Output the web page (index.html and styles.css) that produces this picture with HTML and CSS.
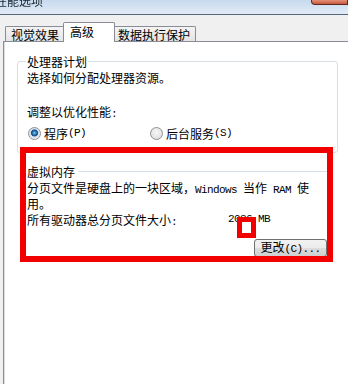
FILE: index.html
```html
<!DOCTYPE html>
<html lang="zh-CN">
<head>
<meta charset="utf-8">
<title>性能选项</title>
<link rel="stylesheet" href="styles.css">
</head>
<body>
<div class="titlebar">
  <span class="title">性能选项</span>
  <span class="close"></span>
</div>
<div class="tabstrip">
  <div class="tab first">视觉效果</div>
  <div class="tab active">高级</div>
  <div class="tab last">数据执行保护</div>
</div>
<div class="panel">
  <fieldset class="group">
    <legend>处理器计划</legend>
    <p class="line">选择如何分配处理器资源。</p>
    <p class="line gap-lg">调整以优化性能<span class="en">:</span></p>
    <div class="radios">
      <label class="opt"><span class="radio checked"></span>程序<span class="en">(P)</span></label>
      <label class="opt"><span class="radio"></span>后台服务<span class="en">(S)</span></label>
    </div>
  </fieldset>
  <section class="group2">
    <div class="g2head"><span>虚拟内存</span><span class="rule"></span></div>
    <p class="line gap-sm">分页文件是硬盘上的一块区域，<span class="en">Windows </span>当作<span class="en"> RAM </span>使<br>用。</p>
    <div class="size gap-sm"><span class="lbl">所有驱动器总分页文件大小<span class="en">:</span></span><span class="en">2036 MB</span></div>
    <div class="btnrow"><button class="btn" type="button">更改<span class="en">(C)...</span></button></div>
  </section>
</div>
<div class="mark big"></div>
<div class="mark small"></div>
</body>
</html>
```

FILE: styles.css
```css
html, body {
  margin: 0;
  height: 100%;
}
body {
  display: flex;
  flex-direction: column;
  background: #f0f0f0;
  font: 12px/13px "Noto Sans CJK SC", sans-serif;
  color: #000;
  overflow: hidden;
}
.en {
  font-family: "Liberation Mono", monospace;
  font-size: 11px;
  letter-spacing: -0.6px;
}
.titlebar {
  height: 14px;
  border-bottom: 1px solid #56677b;
  background: linear-gradient(#c6daee, #e2ecf7);
  display: flex;
  justify-content: space-between;
  overflow: hidden;
  flex: none;
}
.title {
  font-size: 12px;
  line-height: 12px;
  margin: -5px 0 0 -5px;
  color: #1c2630;
  filter: blur(0.4px);
}
.close {
  width: 35px;
  height: 4px;
  background: linear-gradient(#e3917a, #c9573c);
  border: 1px solid #5e2a20;
  border-top: 0;
  border-radius: 0 0 0 4px;
}
.tabstrip {
  display: flex;
  align-items: flex-end;
  height: 26px;
  padding-left: 5px;
  flex: none;
}
.tab {
  box-sizing: border-box;
  border: 1px solid #898c95;
  border-bottom: 0;
  background: linear-gradient(#f4f4f4, #e4e4e4);
  white-space: nowrap;
}
.first {
  height: 15px;
  padding: 1px 4px 0 5px;
  border-right: 0;
  border-radius: 2px 0 0 0;
}
.active {
  height: 20px;
  padding: 2px 20px 0 6px;
  margin-bottom: -1px;
  background: #fff;
  position: relative;
  z-index: 1;
  border-radius: 2px 2px 0 0;
}
.last {
  height: 15px;
  padding: 1px 5px 0 3px;
  border-left: 0;
  border-radius: 0 2px 0 0;
}
.panel {
  flex: 1;
  background: #fff;
  border-top: 1px solid #898c95;
  border-left: 1px solid #8e8f8f;
  box-shadow: inset 1px 0 0 #dcdcdc;
  margin-left: 3px;
  padding: 13px 0 0 13px;
}
.group {
  margin: 0;
  width: 321px;
  box-sizing: border-box;
  border: 1px solid #d5dfe5;
  border-radius: 3px;
  padding: 3px 9px 12px 9px;
  min-width: 0;
}
.group legend {
  padding: 0 1px;
  margin-left: -1px;
  line-height: 13px;
}
.line {
  margin: 0;
}
.gap-lg {
  margin-top: 21px;
}
.gap-sm {
  margin-top: 3px;
}
.radios {
  display: flex;
  margin-top: 6px;
  padding-left: 1px;
}
.opt {
  display: flex;
  align-items: center;
  width: 122px;
  white-space: nowrap;
}
.radio {
  width: 13px;
  height: 13px;
  box-sizing: border-box;
  margin-right: 3px;
  border-radius: 50%;
  border: 1px solid #8e8f8f;
  background: radial-gradient(circle at 50% 40%, #f8f8f8 0, #e2e2e2 6px);
}
.radio.checked {
  background: radial-gradient(circle at 50% 45%, #9ad6f5 0, #2f7fbd 1.6px, #1a4c7a 3.2px, #c9dbea 3.8px, #f2f2f2 6px);
}
.group2 {
  width: 321px;
  box-sizing: border-box;
  margin-top: 12px;
  padding: 0 11px 0 10px;
}
.g2head {
  display: flex;
  align-items: center;
}
.rule {
  flex: 1;
  height: 1px;
  background: #d5dfe5;
  margin-left: 3px;
}
.size {
  display: flex;
}
.lbl {
  width: 201px;
}
.btnrow {
  display: flex;
  justify-content: flex-end;
  margin-top: 10px;
}
.btn {
  width: 73px;
  height: 18px;
  padding: 0;
  font: inherit;
  line-height: 13px;
  color: #000;
  border: 1px solid #707070;
  border-radius: 3px;
  background: linear-gradient(#f2f2f2 0%, #ebebeb 50%, #dddddd 50%, #cfcfcf 100%);
}
.mark {
  position: absolute;
  box-sizing: border-box;
  border: 6px solid #f20000;
}
.big {
  left: 20px;
  top: 147px;
  width: 313px;
  height: 115px;
}
.small {
  left: 237px;
  top: 217px;
  width: 19px;
  height: 21px;
  border-width: 5px;
  background: #fff;
}
```
